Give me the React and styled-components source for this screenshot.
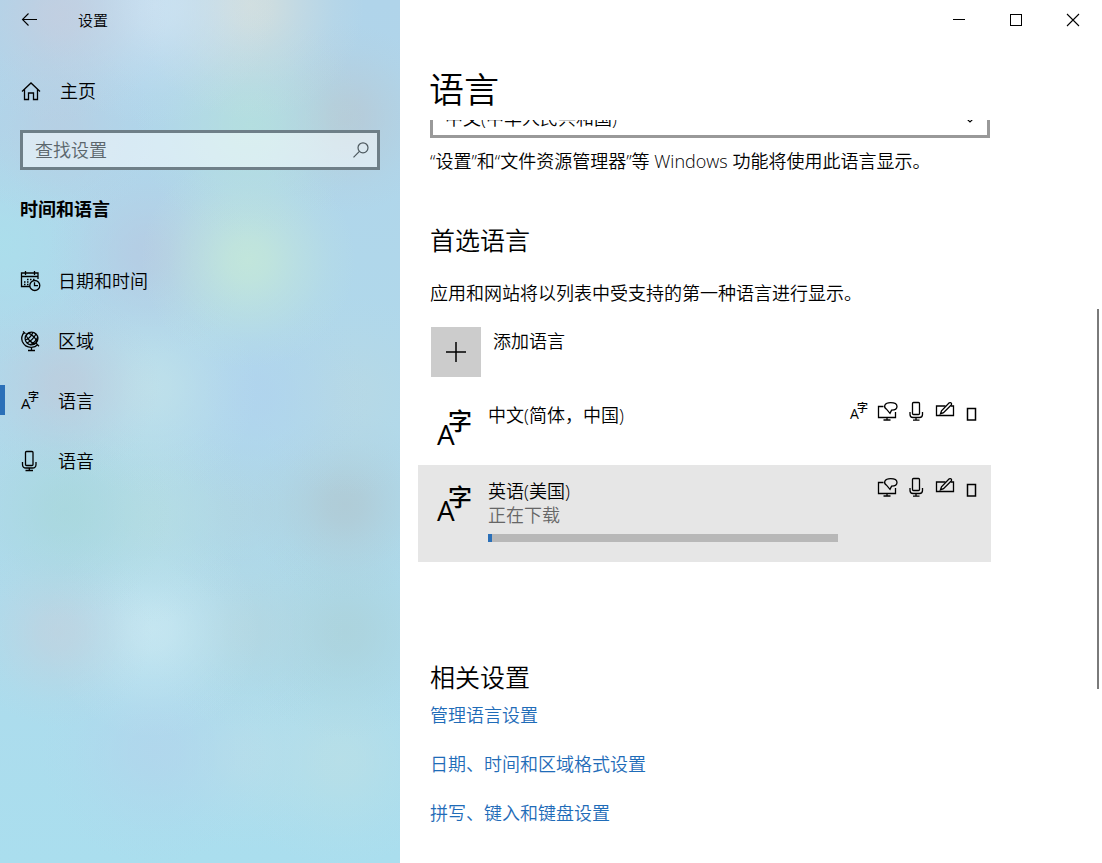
import React from "react";
import styled, { createGlobalStyle } from "styled-components";

const GlobalStyle = createGlobalStyle`
  * { box-sizing: border-box; }
  body {
    margin: 0;
    background: #fff;
    color: #000;
    font-family: "Open Sans", "Noto Sans CJK SC", sans-serif;
    font-size: 18px;
    font-weight: 350;
    line-height: 24px;
  }
  button, input, select { font: inherit; color: inherit; }
  h1, h2, p, ul { margin: 0; padding: 0; font-weight: 350; }
  ul { list-style: none; }
  svg { display: block; flex: none; overflow: visible; }
`;

const blob = (x, y, r, color) =>
  `radial-gradient(circle at ${x}px ${y}px, rgba(${color}, 0.75) 0, rgba(${color}, 0.65) ${Math.round(r * 0.25)}px, rgba(${color}, 0.38) ${Math.round(r * 0.6)}px, rgba(${color}, 0.12) ${r}px, rgba(${color}, 0) ${Math.round(r * 1.35)}px)`;

const acrylic = [
  blob(60, 15, 80, "198, 205, 222"),
  blob(155, 5, 90, "209, 229, 244"),
  blob(250, 5, 85, "220, 225, 218"),
  blob(250, 125, 85, "181, 225, 220"),
  blob(345, 118, 70, "184, 200, 211"),
  blob(60, 130, 70, "184, 206, 226"),
  blob(248, 260, 80, "199, 234, 214"),
  blob(150, 255, 75, "182, 202, 226"),
  blob(0, 245, 90, "170, 224, 236"),
  blob(65, 385, 70, "190, 203, 219"),
  blob(150, 388, 80, "194, 226, 234"),
  blob(255, 395, 85, "176, 211, 238"),
  blob(350, 395, 75, "184, 216, 228"),
  blob(345, 505, 70, "176, 199, 208"),
  blob(65, 510, 80, "168, 215, 219"),
  blob(150, 515, 80, "182, 221, 226"),
  blob(240, 510, 70, "176, 212, 226"),
  blob(58, 632, 70, "192, 210, 223"),
  blob(152, 630, 80, "204, 233, 242"),
  blob(245, 630, 75, "180, 214, 224"),
  blob(345, 632, 80, "172, 209, 217"),
  blob(155, 750, 85, "178, 213, 236"),
  blob(245, 755, 70, "184, 222, 234"),
  blob(340, 760, 80, "186, 223, 230"),
].join(", ");

const Window = styled.div`
  display: flex;
  height: 100vh;
`;

const Sidebar = styled.aside`
  width: 400px;
  flex: none;
  background: ${acrylic}, linear-gradient(#b0d4ea 0, #b0d9eb 50%, #aadeee 100%);
`;

const SideTitleBar = styled.header`
  display: flex;
  align-items: center;
  gap: 38px;
  height: 40px;
  padding-left: 20px;
  font-size: 15px;
`;

const IconButton = styled.button`
  display: flex;
  padding: 0;
  border: 0;
  background: none;
`;

const SideLink = styled.a`
  position: relative;
  display: flex;
  align-items: center;
  gap: ${(p) => (p.$home ? 18 : 16)}px;
  height: ${(p) => (p.$home ? 40 : 60)}px;
  margin-top: ${(p) => (p.$home ? 31 : 0)}px;
  padding-left: 20px;
  color: #000;
  text-decoration: none;

  &[aria-current]::before {
    content: "";
    position: absolute;
    left: 0;
    top: 14px;
    width: 5px;
    height: 30px;
    background: #2b70b8;
  }
`;

const SearchBox = styled.label`
  display: flex;
  align-items: center;
  height: 40px;
  margin: 19px 20px 0;
  padding: 0 7px 0 12px;
  border: 3px solid #6e7f88;
  background: rgba(255, 255, 255, 0.5);
`;

const SearchInput = styled.input`
  flex: 1;
  min-width: 0;
  padding: 0;
  border: 0;
  outline: 0;
  background: none;

  &::placeholder { color: #5b666c; opacity: 1; }
`;

const SideHeading = styled.h2`
  margin: 27px 0 30px 20px;
  font-size: 18px;
  font-weight: 700;
`;

const Main = styled.main`
  position: relative;
  display: flex;
  flex: 1;
  flex-direction: column;
  min-width: 0;
`;

const WindowControls = styled.div`
  display: flex;
  justify-content: flex-end;
  height: 40px;
  padding-right: 1px;
`;

const ControlButton = styled(IconButton)`
  width: 57px;
  align-items: center;
  justify-content: center;
`;

const PageTitle = styled.h1`
  height: 80px;
  padding: 26px 29px 0;
  font-size: 35px;
  line-height: 48px;
`;

const ScrollArea = styled.div`
  flex: 1;
  min-height: 0;
  overflow: hidden;
  padding: 0 111px 0 30px;
`;

const SelectWrap = styled.div`
  position: relative;
  margin: -22px 1px 11px 0;

  svg {
    position: absolute;
    right: 13px;
    top: 17px;
    pointer-events: none;
  }
`;

const LanguageSelect = styled.select`
  display: block;
  width: 100%;
  height: 40px;
  padding: 0 12px;
  border: 3px solid #999;
  border-radius: 0;
  background: #fff;
  appearance: none;
`;

const SectionHeading = styled.h2`
  margin-top: ${(p) => p.$top}px;
  font-size: 25px;
  line-height: 34px;
`;

const Intro = styled.p`
  margin-top: 24px;
`;

const AddButton = styled.button`
  display: flex;
  align-items: flex-start;
  gap: 12px;
  margin: 22px 0 12px 1px;
  padding: 0;
  border: 0;
  background: none;
  line-height: 28px;
`;

const AddTile = styled.span`
  display: grid;
  place-items: center;
  width: 50px;
  height: 50px;
  background: #ccc;
`;

const LanguageList = styled.ul`
  margin-left: -12px;
`;

const LanguageRow = styled.li`
  display: flex;
  align-items: flex-start;
  min-height: 76px;
  padding: 14px 6px 20px 18px;
  background: ${(p) => (p.$selected ? "#e6e6e6" : "transparent")};
`;

const LanguageText = styled.div`
  flex: 1;
  margin-left: 12px;
`;

const Status = styled.p`
  color: #666;
`;

const Progress = styled.progress`
  display: block;
  width: 350px;
  max-width: 100%;
  height: 8px;
  margin-top: 7px;
  border: 0;
  appearance: none;

  &::-webkit-progress-bar { background: #b8b8b8; }
  &::-webkit-progress-value { background: #2b70b8; }
`;

const Features = styled.div`
  display: flex;
  margin: -4px 0 0 -147px;
`;

const LinkList = styled.ul`
  display: grid;
  gap: 25px;
  margin-top: 9px;
`;

const TextLink = styled.a`
  color: #1f6cb8;
  text-decoration: none;
`;

const ScrollThumb = styled.div`
  position: absolute;
  top: 309px;
  right: 3px;
  bottom: 174px;
  width: 2px;
  background: #7a7a7a;
`;

const Svg = ({ w, h, sw = 1.2, children }) => (
  <svg width={w} height={h} viewBox={`0 0 ${w} ${h}`} fill="none" stroke="#000" strokeWidth={sw} aria-hidden="true">
    {children}
  </svg>
);

const Glyph = ({ x, y, size, cjk, weight = 400 }) => (
  <text
    x={x}
    y={y}
    fontSize={size}
    fontWeight={weight}
    fontFamily={cjk ? '"Noto Sans CJK SC", sans-serif' : '"Open Sans", sans-serif'}
    fill="#000"
    stroke="none"
  >
    {cjk ? "字" : "A"}
  </text>
);

const BackIcon = () => (
  <Svg w={20} h={20} sw={1.1}><path d="M17 9.500H2.500M8.500 3.500 2.500 9.500l6 6" /></Svg>
);
const HomeIcon = () => (
  <Svg w={22} h={22} sw={1.3}><path d="M2 11.500 11 3l9 8.500M4.500 9.500v10h4v-6.500h5v6.500h4v-10" /></Svg>
);
const SearchIcon = () => (
  <svg width="18" height="18" viewBox="0 0 18 18" fill="none" stroke="#4c585e" strokeWidth="1.2" aria-hidden="true">
    <circle cx="11" cy="6.800" r="5" /><path d="M7.400 10.400 1.500 16.300" />
  </svg>
);
const CalendarIcon = () => (
  <Svg w={22} h={22} sw={1.3}>
    <path d="M10 16.500H1.500V3H18v6M1.500 6.500H18M5.500 1v4M14.500 1v4" />
    <path d="M7 9.500h1.500M10 9.500h1.500M13 9.500h1.500M4 12h1.500M7 12h1.500M4 14.500h1.500M7 14.500h1.500" strokeWidth="1.400" />
    <circle cx="14.800" cy="15.500" r="5" /><path d="M14.500 12.200v3.500H18" />
  </Svg>
);
const GlobeIcon = () => (
  <Svg w={22} h={22} sw={1.3}>
    <circle cx="11.500" cy="8.500" r="6.400" />
    <ellipse cx="11.500" cy="8.500" rx="2.800" ry="6.400" transform="rotate(-45 11.500 8.500)" />
    <path d="M7 13Q12.500 10.500 16 4M5.500 10Q10 8.500 13 2.500M10 14.800Q15.500 12.500 17.800 7" />
    <path d="M3 1.500 5.500 3.700M4 2.500Q0.500 7 2.300 11.500Q5 17.500 11.500 17.300Q15.500 17 17.500 14.700M16 13.200 19 16.200M11.500 17.300V20.500M8 20.500H15" />
  </Svg>
);
const LanguageIcon = () => (
  <Svg w={22} h={22}>
    <Glyph x={1} y={19} size={15} weight={500} /><Glyph x={8} y={11} size={11} cjk weight={500} />
  </Svg>
);
const SpeechIcon = () => (
  <Svg w={22} h={22} sw={1.3}>
    <rect x="5.500" y="1.500" width="7.500" height="14" rx="1" />
    <path d="M2.500 12v2.500Q2.500 18 6 18h6.500Q16 18 16 14.500V12M9.300 18v2.500M5.500 20.500H13" />
  </Svg>
);
const LargeLanguageIcon = () => (
  <Svg w={40} h={42}>
    <Glyph x={1} y={42} size={28} weight={500} /><Glyph x={12} y={27} size={24} cjk weight={500} />
  </Svg>
);
const DisplayLanguage = () => (
  <Svg w={29} h={24}>
    <Glyph x={7} y={20} size={14} /><Glyph x={14} y={13} size={11} cjk weight={500} />
  </Svg>
);
const TextToSpeech = () => (
  <Svg w={29} h={24} sw={1.3}>
    <path d="M11.500 7.500H6.500v11h17V13M15 18.500v2.500M11.500 21h7" />
    <path d="M14.500 10.200C11 8 12.500 3.600 18.500 3.600C22.500 3.600 25 5.300 25 7.400C25 9.600 22.500 11 19.600 11.100L18 14.400Z" />
  </Svg>
);
const SpeechRecognition = () => (
  <Svg w={29} h={24} sw={1.3}>
    <rect x="11.500" y="3.500" width="7" height="12" rx="1" />
    <path d="M9 13v2.500Q9 18.500 12 18.500h6.500Q21.500 18.500 21.500 15.500V13M15 18.500v2.700M12 21.200h6.500" />
  </Svg>
);
const Handwriting = () => (
  <Svg w={29} h={24} sw={1.3}>
    <path d="M15.500 7H6.500v9.500h17V7H21" />
    <path d="M10.500 14.800 11.500 11.800 19.200 3.900Q20.800 3.100 21.500 4.500Q21.800 5.300 21.200 6L13.500 13.600Z" />
  </Svg>
);
const Package = () => (
  <Svg w={26} h={24} sw={1.5}><rect x="8.500" y="9.500" width="8" height="11.500" /></Svg>
);

const NAV = [
  ["日期和时间", CalendarIcon],
  ["区域", GlobeIcon],
  ["语言", LanguageIcon],
  ["语音", SpeechIcon],
];

const LINKS = ["管理语言设置", "日期、时间和区域格式设置", "拼写、键入和键盘设置"];

export default function App() {
  return (
    <Window>
      <GlobalStyle />
      <Sidebar>
        <SideTitleBar>
          <IconButton aria-label="返回"><BackIcon /></IconButton>
          <span>设置</span>
        </SideTitleBar>
        <SideLink href="#home" $home><HomeIcon />主页</SideLink>
        <SearchBox>
          <SearchInput type="text" placeholder="查找设置" aria-label="查找设置" />
          <SearchIcon />
        </SearchBox>
        <SideHeading>时间和语言</SideHeading>
        <nav>
          {NAV.map(([label, Icon]) => (
            <SideLink key={label} href="#nav" aria-current={label === "语言" ? "page" : undefined}>
              <Icon />{label}
            </SideLink>
          ))}
        </nav>
      </Sidebar>

      <Main>
        <WindowControls>
          <ControlButton aria-label="最小化"><Svg w={14} h={14} sw={1}><path d="M1 6.500h12" /></Svg></ControlButton>
          <ControlButton aria-label="最大化"><Svg w={14} h={14} sw={1}><rect x="1.500" y="1.500" width="11" height="11" /></Svg></ControlButton>
          <ControlButton aria-label="关闭"><Svg w={14} h={14} sw={1.1}><path d="m1 1 12 12M13 1 1 13" /></Svg></ControlButton>
        </WindowControls>
        <PageTitle>语言</PageTitle>
        <ScrollArea>
          <SelectWrap>
            <LanguageSelect aria-label="Windows 显示语言">
              <option>中文(中华人民共和国)</option>
            </LanguageSelect>
            <Svg w={14} h={8}><path d="m1 1 6 6 6-6" /></Svg>
          </SelectWrap>
          <p>“设置”和“文件资源管理器”等 Windows 功能将使用此语言显示。</p>

          <SectionHeading $top={50}>首选语言</SectionHeading>
          <Intro>应用和网站将以列表中受支持的第一种语言进行显示。</Intro>
          <AddButton>
            <AddTile><Svg w={20} h={20} sw={1.5}><path d="M0 10h20M10 0v20" /></Svg></AddTile>
            添加语言
          </AddButton>
          <LanguageList>
            <LanguageRow>
              <LargeLanguageIcon />
              <LanguageText><p>中文(简体，中国)</p></LanguageText>
              <Features><DisplayLanguage /><TextToSpeech /><SpeechRecognition /><Handwriting /><Package /></Features>
            </LanguageRow>
            <LanguageRow $selected>
              <LargeLanguageIcon />
              <LanguageText>
                <p>英语(美国)</p>
                <Status>正在下载</Status>
                <Progress value={1} max={100} aria-label="下载进度" />
              </LanguageText>
              <Features><TextToSpeech /><SpeechRecognition /><Handwriting /><Package /></Features>
            </LanguageRow>
          </LanguageList>

          <SectionHeading $top={98}>相关设置</SectionHeading>
          <LinkList>
            {LINKS.map((label) => (
              <li key={label}><TextLink href="#related">{label}</TextLink></li>
            ))}
          </LinkList>
        </ScrollArea>
        <ScrollThumb />
      </Main>
    </Window>
  );
}
